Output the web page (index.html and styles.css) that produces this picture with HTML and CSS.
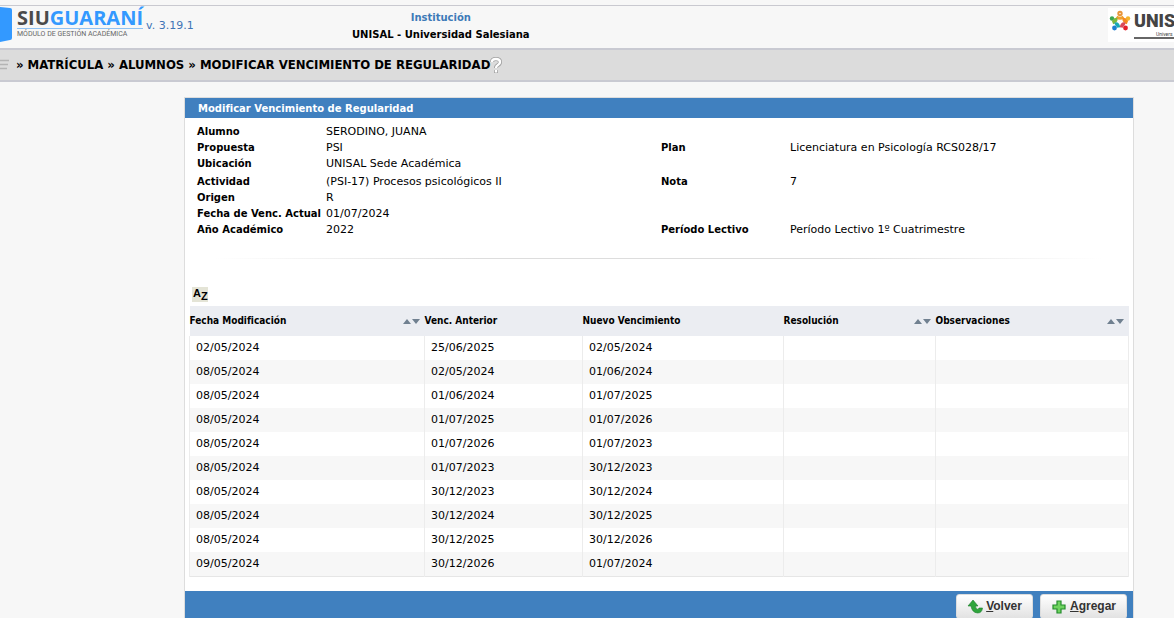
FILE: index.html
```html
<!DOCTYPE html>
<html lang="es">
<head>
<meta charset="utf-8">
<title>Modificar Vencimiento de Regularidad</title>
<link rel="stylesheet" href="styles.css">
</head>
<body>

<svg width="0" height="0" class="defs">
  <symbol id="orden" viewBox="0 0 17 7">
    <path d="M0 6 L4 1 L8 6 Z M9 1 L17 1 L13 6 Z" fill="#708090"/>
  </symbol>
</svg>

<header class="cabecera">
  <div class="logo">
    <svg class="logo-marca" width="12" height="35" viewBox="0 0 12 35">
      <path d="M0 0 L10 1 Q12 1 12 3 L12 31 Q12 33 10 33 L0 35 Z" fill="#3399ff"/>
    </svg>
    <div class="logo-texto">
      <div class="logo-nombre">SIU<span>GUARANÍ</span></div>
      <div class="logo-bajada">MÓDULO DE GESTIÓN ACADÉMICA</div>
    </div>
    <div class="version">v. 3.19.1</div>
  </div>
  <div class="institucion">
    <div class="institucion-titulo">Institución</div>
    <div class="institucion-nombre">UNISAL - Universidad Salesiana</div>
  </div>
  <div class="unisal">
    <svg width="22" height="22" viewBox="0 0 22 22" fill="none" stroke-width="3.600">
      <circle cx="11" cy="3.500" r="1.700" stroke="#e8953a" stroke-width="2"/>
      <path d="M7.500 7 Q11 9.500 14.500 7" stroke="#f0a030" stroke-width="3"/>
      <circle cx="3" cy="8.500" r="2.200" fill="#3aa655"/>
      <path d="M6.500 8 Q7.500 11 3.500 12.500" stroke="#7cb83c"/>
      <circle cx="19" cy="8.500" r="2.200" fill="#f4b52c"/>
      <path d="M15.500 8 Q14.500 11 18.500 12.500" stroke="#f58a1f"/>
      <circle cx="5.500" cy="18" r="2.400" fill="#1d7fd1"/>
      <path d="M6 14.500 Q9 13 9.500 17.500" stroke="#18a9b5"/>
      <circle cx="16.500" cy="18" r="2.400" fill="#e3202b"/>
      <path d="M16 14.500 Q13 13 12.500 17.500" stroke="#d94a5b"/>
    </svg>
    <div class="unisal-texto">
      <div class="unisal-nombre">UNIS</div>
      <div class="unisal-bajada">Univers</div>
    </div>
  </div>
</header>

<nav class="barra">
  <svg width="9" height="12" viewBox="0 0 9 12">
    <path d="M0 1.500H9M0 5.500H8M0 9.500H7" stroke="#b4b4b4" stroke-width="1.500"/>
  </svg>
  <span class="ruta">» MATRÍCULA » ALUMNOS » MODIFICAR VENCIMIENTO DE REGULARIDAD</span>
  <svg class="ayuda" width="12" height="17" viewBox="0 0 12 17" fill="none">
    <path d="M2 5 Q2 2 6 2 Q10 2 10 5 Q10 7 8 8 Q6 9 6 11 M6 13 V16" stroke="#a0a0a0" stroke-width="4"/>
    <path d="M2 5 Q2 2 6 2 Q10 2 10 5 Q10 7 8 8 Q6 9 6 11 M6 13 V15.500" stroke="#fff" stroke-width="2.400"/>
  </svg>
</nav>

<main class="panel">
  <h1 class="panel-titulo">Modificar Vencimiento de Regularidad</h1>

  <div class="datos">
    <dl class="grupo">
      <dt>Alumno</dt><dd class="ancho">SERODINO, JUANA</dd>
      <dt>Propuesta</dt><dd>PSI</dd>
      <dt>Plan</dt><dd>Licenciatura en Psicología RCS028/17</dd>
      <dt>Ubicación</dt><dd class="ancho">UNISAL Sede Académica</dd>
    </dl>
    <dl class="grupo">
      <dt>Actividad</dt><dd>(PSI-17) Procesos psicológicos II</dd>
      <dt>Nota</dt><dd>7</dd>
      <dt>Origen</dt><dd class="ancho">R</dd>
      <dt>Fecha de Venc. Actual</dt><dd class="ancho">01/07/2024</dd>
      <dt>Año Académico</dt><dd>2022</dd>
      <dt>Período Lectivo</dt><dd>Período Lectivo 1º Cuatrimestre</dd>
    </dl>
  </div>

  <hr class="separador">

  <div class="cuadro">
    <button type="button" class="ordenar" aria-label="Ordenar"><span class="letra-a">A</span><span class="letra-z">Z</span></button>
    <table class="historial">
      <colgroup>
        <col class="col-fecha"><col class="col-anterior"><col class="col-nuevo"><col class="col-resolucion"><col>
      </colgroup>
      <thead>
        <tr>
          <th><div class="encabezado">Fecha Modificación <svg width="17" height="7"><use href="#orden"/></svg></div></th>
          <th>Venc. Anterior</th>
          <th>Nuevo Vencimiento</th>
          <th><div class="encabezado">Resolución <svg width="17" height="7"><use href="#orden"/></svg></div></th>
          <th><div class="encabezado">Observaciones <svg width="17" height="7"><use href="#orden"/></svg></div></th>
        </tr>
      </thead>
      <tbody>
        <tr><td>02/05/2024</td><td>25/06/2025</td><td>02/05/2024</td><td></td><td></td></tr>
        <tr><td>08/05/2024</td><td>02/05/2024</td><td>01/06/2024</td><td></td><td></td></tr>
        <tr><td>08/05/2024</td><td>01/06/2024</td><td>01/07/2025</td><td></td><td></td></tr>
        <tr><td>08/05/2024</td><td>01/07/2025</td><td>01/07/2026</td><td></td><td></td></tr>
        <tr><td>08/05/2024</td><td>01/07/2026</td><td>01/07/2023</td><td></td><td></td></tr>
        <tr><td>08/05/2024</td><td>01/07/2023</td><td>30/12/2023</td><td></td><td></td></tr>
        <tr><td>08/05/2024</td><td>30/12/2023</td><td>30/12/2024</td><td></td><td></td></tr>
        <tr><td>08/05/2024</td><td>30/12/2024</td><td>30/12/2025</td><td></td><td></td></tr>
        <tr><td>08/05/2024</td><td>30/12/2025</td><td>30/12/2026</td><td></td><td></td></tr>
        <tr><td>09/05/2024</td><td>30/12/2026</td><td>01/07/2024</td><td></td><td></td></tr>
      </tbody>
    </table>
  </div>

  <div class="botonera">
    <button type="button" class="boton">
      <svg width="16" height="16" viewBox="0 0 16 16">
        <path d="M6 2 L11 8 H8.500 Q8.500 11 11 11.500 L12 10 L15.500 10 Q15 15 10.500 15 Q5 14.500 4 8 H1 Z" fill="#2fa53c" stroke="#1c7d2d" stroke-width="0.600"/>
      </svg>
      <span><u>V</u>olver</span>
    </button>
    <button type="button" class="boton">
      <svg width="16" height="16" viewBox="0 0 16 16">
        <path d="M6 3 H10 V7 H14 V11 H10 V15 H6 V11 H2 V7 H6 Z" fill="#6fd35f" stroke="#238b2c" stroke-width="1.200"/>
      </svg>
      <span><u>A</u>gregar</span>
    </button>
  </div>
</main>

</body>
</html>
```
FILE: styles.css
```css
* {
  box-sizing: border-box;
}
body {
  margin: 0;
  background-color: #f7f7f7;
  color: #000;
  font-family: Verdana, "DejaVu Sans", sans-serif;
  font-size: 11px;
  line-height: 16px;
}
.defs {
  display: block;
}

/* cabecera */
.cabecera {
  display: flex;
  margin-top: 5px;
  height: 45px;
  border-top: 1px solid #c9c9d0;
  border-bottom: 2px solid #c9cad2;
  overflow: hidden;
}
.logo {
  display: flex;
  width: 352px;
  padding-top: 1px;
}
.logo-texto {
  margin-left: 5px;
  font-family: "Open Sans", sans-serif;
}
.logo-nombre {
  border-bottom: 1px solid #8fc1f2;
  font-size: 20px;
  font-weight: bold;
  line-height: 21px;
  color: #4a4a4a;
}
.logo-nombre span {
  color: #3399ff;
}
.logo-bajada {
  font-family: Roboto, sans-serif;
  font-size: 7px;
  line-height: 11px;
  color: #666;
}
.version {
  margin-left: 3px;
  padding-top: 11px;
  color: #3f74b5;
}
.institucion {
  padding-top: 3px;
  font-size: 10px;
  font-weight: bold;
  text-align: center;
  line-height: 17px;
}
.institucion-titulo {
  color: #3d7ab8;
}
.unisal {
  display: flex;
  width: 66px;
  height: 34px;
  margin: 2px 0 0 auto;
  padding: 2px 0 0 1px;
  background-color: #fff;
  overflow: hidden;
}
.unisal svg {
  flex-shrink: 0;
}
.unisal-texto {
  margin-left: 3px;
  font-family: Roboto, sans-serif;
  color: #444;
}
.unisal-nombre {
  font-size: 18px;
  font-weight: 900;
  line-height: 21px;
}
.unisal-bajada {
  padding-left: 22px;
  border-bottom: 2px solid #666;
  font-size: 5px;
  line-height: 6px;
  white-space: nowrap;
}

/* barra de navegacion */
.barra {
  display: flex;
  align-items: center;
  height: 32px;
  border-bottom: 2px solid #c9cad2;
  background-color: #dcdcdc;
}
.ruta {
  margin-left: 7px;
  font-family: "DejaVu Sans Condensed", Verdana, sans-serif;
  font-size: 13px;
  font-weight: bold;
}

/* panel */
.panel {
  margin: 15px 40px 0 184px;
  border: 1px solid #ddd;
  background-color: #fff;
}
.panel-titulo {
  margin: 0;
  padding: 3px 13px 1px;
  background-color: #4080bf;
  color: #fff;
  font-size: 10px;
  font-weight: bold;
}
.datos {
  padding: 6px 12px 0;
}
.grupo {
  display: grid;
  grid-template-columns: 129px 335px 129px 1fr;
  margin: 0 0 2px;
}
.grupo dt {
  font-size: 10px;
  font-weight: bold;
  white-space: nowrap;
}
.grupo dd {
  margin: 0;
}
.grupo .ancho {
  grid-column: 2 / -1;
}
.separador {
  height: 1px;
  margin: 20px 30px 0;
  border: 0;
  background: linear-gradient(to right, #fff, #ddd 30%, #ddd 70%, #fff);
}
.cuadro {
  padding: 28px 4px 14px;
}
.ordenar {
  display: flex;
  width: 16px;
  height: 15px;
  margin: 0 0 4px 3px;
  padding: 0 1px;
  border: 0;
  background-color: #e4e4d6;
  color: #000;
  font: bold 11px/12px "Liberation Sans", Arial, sans-serif;
  cursor: pointer;
}
.letra-z {
  padding-top: 3px;
}

.historial {
  width: 100%;
  border-collapse: collapse;
  table-layout: fixed;
}
.col-fecha {
  width: 235px;
}
.col-anterior {
  width: 158px;
}
.col-nuevo {
  width: 201px;
}
.col-resolucion {
  width: 152px;
}
.historial th {
  height: 30px;
  padding: 0;
  background-color: #ebedf2;
  font-family: Tahoma, "DejaVu Sans Condensed", sans-serif;
  font-size: 10px;
  text-align: left;
}
.encabezado {
  display: flex;
  align-items: center;
  justify-content: space-between;
  padding-right: 5px;
}
.historial td {
  height: 24px;
  padding: 0 6px;
  border: 1px solid #ececec;
  border-top: 0;
  border-bottom: 0;
}
.historial tbody {
  border-bottom: 1px solid #e6e6e6;
}
.historial tbody tr:nth-child(even) {
  background-color: #f7f7f7;
}

.botonera {
  display: flex;
  justify-content: flex-end;
  gap: 7px;
  padding: 3px 6px;
  background-color: #4080bf;
}
.boton {
  display: flex;
  align-items: center;
  gap: 3px;
  height: 25px;
  padding: 0 10px;
  border: 1px solid #ddd;
  border-radius: 3px;
  background: linear-gradient(#fff, #e2e2e2);
  color: #333;
  font: bold 12px "Liberation Sans", Arial, sans-serif;
  cursor: pointer;
}
.boton:hover {
  background: #fff;
}
```
